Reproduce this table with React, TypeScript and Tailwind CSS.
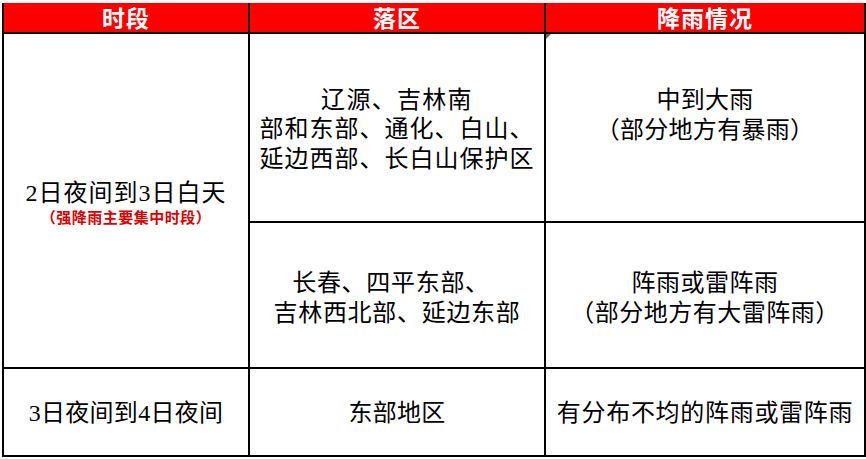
import React from "react";

const font = { fontFamily: '"Liberation Serif", "Noto Sans CJK SC", serif' };

export default function App() {
  return (
    <div className="w-[866px] h-[459px] bg-white pt-[3px] pl-[2px]" style={font}>
      <div className="grid grid-cols-[244px_294px_318px] grid-rows-[29px_187px_144px_86px] gap-[2px] bg-black px-[2px] pb-[2px] w-[864px] text-black whitespace-nowrap">
        {/* header */}
        <div className="bg-[#ff0000] flex items-center justify-center pt-[3px] text-white text-[23px] font-bold tracking-[1px] leading-none">时段</div>
        <div className="bg-[#ff0000] flex items-center justify-center pt-[3px] text-white text-[23px] font-bold tracking-[1px] leading-none">落区</div>
        <div className="bg-[#ff0000] flex items-center justify-center pt-[3px] text-white text-[23px] font-bold tracking-[1px] leading-none">降雨情况</div>

        {/* row 1 left spanning two rows */}
        <div className="row-span-2 bg-white flex flex-col items-center justify-center pt-[7px]">
          <div className="text-[24px] leading-[28px] tracking-[1px]">2日夜间到3日白天</div>
          <div className="text-[15px] leading-[22px] font-bold text-[#e00000] tracking-[0.5px]">（强降雨主要集中时段）</div>
        </div>

        <div className="bg-white flex flex-col items-center justify-center pt-[5px] text-[24px] leading-[29.5px]">
          <div className="tracking-[1.3px]">辽源、吉林南</div>
          <div className="tracking-[1px]">部和东部、通化、白山、</div>
          <div className="tracking-[1px]">延边西部、长白山保护区</div>
        </div>
        <div className="relative bg-white flex flex-col items-center justify-center pb-[25px] text-[24px] leading-[30px] tracking-[0.3px]">
          <span className="absolute left-0 top-0 w-0 h-0 border-t-[5px] border-r-[5px] border-t-[#2e8b2e] border-r-transparent" />
          <div>中到大雨</div>
          <div>（部分地方有暴雨）</div>
        </div>

        {/* row 2 */}
        <div className="bg-white flex flex-col items-center justify-center pt-[6px] text-[24px] leading-[30px] tracking-[0.7px]">
          <div className="pr-[12px]">长春、四平东部、</div>
          <div>吉林西北部、延边东部</div>
        </div>
        <div className="bg-white flex flex-col items-center justify-center pt-[6px] text-[24px] leading-[30px] tracking-[0.5px]">
          <div>阵雨或雷阵雨</div>
          <div>（部分地方有大雷阵雨）</div>
        </div>

        {/* row 3 */}
        <div className="bg-white flex items-center justify-center pt-[2px] text-[24px] leading-none tracking-[0.3px]">3日夜间到4日夜间</div>
        <div className="bg-white flex items-center justify-center pt-[2px] text-[24px] leading-none tracking-[0.3px]">东部地区</div>
        <div className="bg-white flex items-center justify-center pt-[2px] text-[24px] leading-none tracking-[0.7px]">有分布不均的阵雨或雷阵雨</div>
      </div>
    </div>
  );
}
